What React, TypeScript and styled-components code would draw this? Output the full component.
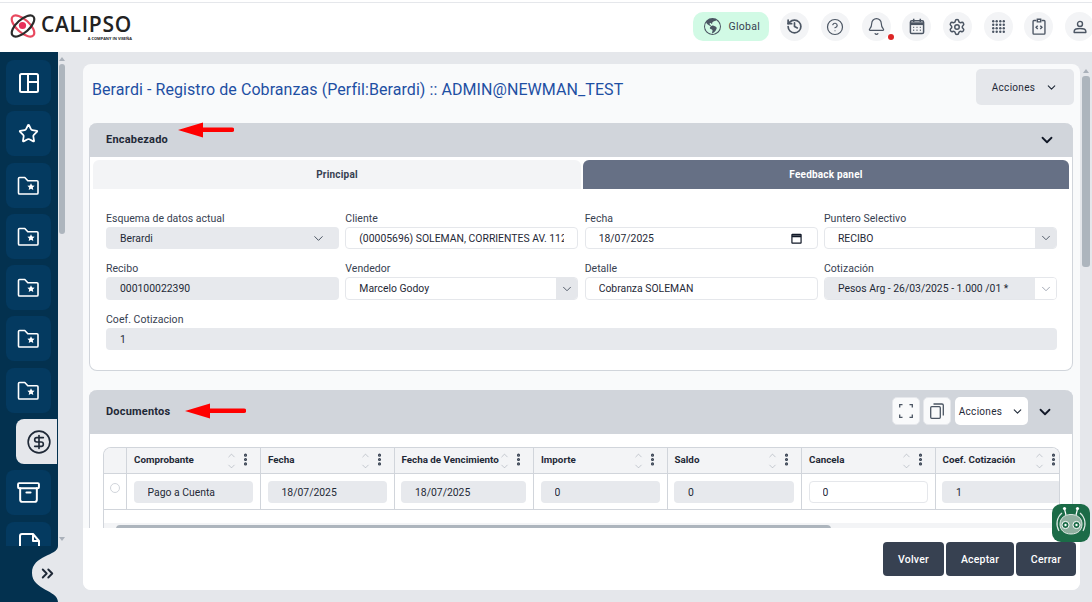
import { FC, ReactNode } from 'react';
import styled, { createGlobalStyle } from 'styled-components';
import { Archive, Bell, ChevronDown, ChevronUp, ChevronsRight, CircleDollarSign, CircleHelp, EllipsisVertical, History, Settings, Star } from 'lucide-react';
import { BsGlobeAmericas } from 'react-icons/bs';

const Global = createGlobalStyle`
  html, body { margin: 0; padding: 0; height: 602px; overflow: hidden; }
  body { font-family: Roboto, "Liberation Sans", sans-serif; background: #e5e7eb; color: #1f2937; }
  * { box-sizing: border-box; }
`;

const FolderStar: FC = () => (
  <svg width="23" height="19" viewBox="0 0 23 19" fill="none">
    <path d="M1.5 2.6c0-.6.5-1.1 1.1-1.1h5.2l3 3.2h9.1c.6 0 1.1.5 1.1 1.1v11.1c0 .6-.5 1.1-1.1 1.1H2.6c-.6 0-1.1-.5-1.1-1.1z" stroke="#fff" strokeWidth="1.6" strokeLinejoin="round" />
    <path d="M14 7.2l1.1 2.3 2.5.3-1.8 1.7.5 2.5-2.3-1.2-2.3 1.2.5-2.5-1.8-1.7 2.5-.3z" fill="#fff" />
  </svg>
);

const PanelsIcon: FC = () => (
  <svg width="20" height="20" viewBox="0 0 20 20" fill="none" stroke="#fff" strokeWidth="2">
    <rect x="1" y="1" width="18" height="18" rx="1.5" />
    <path d="M9 1v18M9 9h10" />
  </svg>
);

const FileCut: FC = () => (
  <svg width="24" height="24" viewBox="0 0 24 24" fill="none" stroke="#fff" strokeWidth="2" strokeLinejoin="round">
    <path d="M3 24V4a2 2 0 0 1 2-2h11l6 7v15M16 2v7h6" />
  </svg>
);

const LogoMark: FC = () => (
  <svg width="26" height="26" viewBox="0 0 26 26" fill="none">
    <ellipse cx="13" cy="13" rx="14" ry="6.4" transform="rotate(42 13 13)" stroke="#e8495f" strokeWidth="2.2" />
    <ellipse cx="13" cy="13" rx="14" ry="6.4" transform="rotate(-42 13 13)" stroke="#2b2b2b" strokeWidth="2.2" />
    <circle cx="12.5" cy="12.5" r="3.6" fill="#e8305a" />
  </svg>
);

const CalendarIcon: FC = () => (
  <svg width="16" height="17" viewBox="0 0 17 18" fill="none" stroke="#4b5563" strokeWidth="1.6">
    <rect x="1.5" y="3" width="14" height="13.5" rx="1.5" />
    <path d="M1.5 6h14" strokeWidth="3" />
    <path d="M5 .8v3.4M12 .8v3.4" />
    <path d="M4.5 10h1M8 10h1M11.5 10h1M4.5 13h1M8 13h1M11.5 13h1" strokeWidth="1.4" />
  </svg>
);

const GridDots: FC = () => (
  <svg width="13" height="13" viewBox="0 0 13 13" fill="#4b5563">
    {[1.2, 4.7, 8.3, 11.8].flatMap((y) => [1.2, 4.7, 8.3, 11.8].map((x) => <circle key={`${x}-${y}`} cx={x} cy={y} r="1.2" />))}
  </svg>
);

const ClipCode: FC = () => (
  <svg width="14" height="17" viewBox="0 0 16 20" fill="none" stroke="#4b5563" strokeWidth="1.6">
    <path d="M5 3H2a1 1 0 0 0-1 1v14a1 1 0 0 0 1 1h12a1 1 0 0 0 1-1V4a1 1 0 0 0-1-1h-3" />
    <path d="M6 1.500h4v3H6zM6.500 9l-2 2 2 2M9.500 9l2 2-2 2" />
  </svg>
);

const UserIcon: FC = () => (
  <svg width="14" height="14" viewBox="0 0 18 18" fill="none" stroke="#4b5563" strokeWidth="1.8">
    <circle cx="9" cy="5" r="3.2" />
    <path d="M1.500 14.500c0-2 2-3.500 7.500-3.500s7.500 1.500 7.500 3.500v1.500h-15z" strokeLinejoin="round" />
  </svg>
);

const FullscreenIcon: FC = () => (
  <svg width="14" height="14" viewBox="0 0 14 14" fill="none" stroke="#4b5563" strokeWidth="1.3">
    <path d="M.7 3.500V.7h2.800M10.500.7h2.800v2.800M13.300 10.500v2.800h-2.800M3.500 13.300H.7v-2.800" />
  </svg>
);

const CopyIcon: FC = () => (
  <svg width="14" height="16" viewBox="0 0 14 16" fill="none" stroke="#4b5563" strokeWidth="1.3">
    <rect x=".7" y="3.700" width="9.600" height="11.600" rx="1" />
    <path d="M3.500 1h8.500a1.300 1.300 0 0 1 1.300 1.300V12.500" />
  </svg>
);

const BotIcon: FC = () => (
  <svg width="38" height="38" viewBox="0 0 38 38" fill="none" stroke="#fff">
    <path d="M7 27a14 14 0 0 1 3-18M31 27a14 14 0 0 0-3-18" strokeWidth="1.2" opacity=".85" />
    <path d="M14 11l-1.500-6M24 11l1.500-6" strokeWidth="1.2" />
    <circle cx="12.500" cy="4.500" r="1.600" fill="#fff" stroke="none" />
    <circle cx="25.500" cy="4.500" r="1.600" fill="#fff" stroke="none" />
    <path d="M8 20c0-6 5-9.500 11-9.500S30 14 30 20s-4 10-11 10S8 26 8 20z" fill="#8fb0a0" stroke="#dfe8e3" strokeWidth="1" />
    <circle cx="13.500" cy="21" r="3.600" fill="#1b6b47" stroke="#fff" strokeWidth="1" />
    <circle cx="24.500" cy="21" r="3.600" fill="#1b6b47" stroke="#fff" strokeWidth="1" />
    <circle cx="13.500" cy="21" r="1.200" fill="#fff" stroke="none" />
    <circle cx="24.500" cy="21" r="1.200" fill="#fff" stroke="none" />
  </svg>
);

const CalendarGlyph: FC = () => (
  <svg width="11" height="11" viewBox="0 0 12 12" fill="none" stroke="#111827" strokeWidth="1.3">
    <rect x="1" y="1.500" width="10" height="9.500" rx=".5" />
    <path d="M1 3.500h10" strokeWidth="2" />
  </svg>
);

const Page = styled.div`
  width: 1092px;
  height: 602px;
  display: flex;
  flex-direction: column;
  position: relative;
  overflow: hidden;
`;

const TopBar = styled.header`
  height: 52px;
  flex: none;
  background: #fff;
  display: flex;
  align-items: center;
  justify-content: space-between;
  padding: 1px 0 0 10px;
  position: relative;
  &::before {
    content: "";
    position: absolute;
    left: 0;
    right: 0;
    top: 2px;
    height: 1px;
    background: #e5e7eb;
  }
`;

const Logo = styled.div`
  display: flex;
  align-items: flex-start;
  gap: 5px;
  margin-top: 1px;
`;

const LogoWords = styled.div`
  display: flex;
  flex-direction: column;
  align-items: flex-end;
`;

const LogoName = styled.span`
  font-family: "Open Sans", sans-serif;
  font-weight: 600;
  font-size: 21px;
  line-height: 23px;
  letter-spacing: 0.7px;
  color: #222;
`;

const LogoTag = styled.span`
  font-family: "Open Sans", sans-serif;
  font-weight: 700;
  font-size: 3.9px;
  line-height: 6px;
  color: #222;
`;

const TopActions = styled.div`
  display: flex;
  align-items: center;
  gap: 11.7px;
  margin-right: -2px;
`;

const GlobalPill = styled.div`
  width: 76px;
  height: 29px;
  border-radius: 10px;
  background: #d1fae5;
  display: flex;
  align-items: center;
  gap: 8px;
  padding-left: 11px;
  font-size: 10.5px;
  letter-spacing: 0.3px;
  color: #374151;
  svg { color: #4b5563; }
`;

const RoundButton = styled.div`
  width: 29px;
  height: 29px;
  border-radius: 50%;
  background: #f3f4f6;
  display: flex;
  align-items: center;
  justify-content: center;
  color: #4b5563;
  position: relative;
`;

const RedDot = styled.span`
  position: absolute;
  right: -3px;
  bottom: 1px;
  width: 6px;
  height: 6px;
  border-radius: 50%;
  background: #dc2626;
`;

const Body = styled.div`
  flex: 1;
  min-height: 0;
  display: flex;
`;

const SideColumn = styled.aside`
  width: 65px;
  flex: none;
  display: flex;
  flex-direction: column;
`;

const SideTop = styled.div`
  flex: 1;
  min-height: 0;
  display: flex;
`;

const SideList = styled.nav`
  width: 58px;
  background: #03314f;
  padding: 8px 0 0 6px;
  display: flex;
  flex-direction: column;
  gap: 6.3px;
  overflow: hidden;
`;

const SideItem = styled.div<{ $active?: boolean }>`
  width: ${(p) => (p.$active ? '41px' : '45px')};
  height: 45px;
  flex: none;
  margin-left: ${(p) => (p.$active ? '10px' : '0')};
  padding-left: ${(p) => (p.$active ? '5px' : '0')};
  border-radius: ${(p) => (p.$active ? '8px 0 0 8px' : '8px')};
  background: ${(p) => (p.$active ? '#e5e7eb' : '#043a60')};
  display: flex;
  align-items: center;
  justify-content: center;
  color: ${(p) => (p.$active ? '#1f2937' : '#fff')};
`;

const SideTuck = styled.div`
  height: 56px;
  width: 58px;
  background: #03314f;
  position: relative;
`;

const SideNotch = styled.svg`
  position: absolute;
  inset: 0;
`;

const SideExpand = styled.div`
  position: absolute;
  left: 38px;
  top: 18px;
  color: #1f2937;
  display: flex;
`;

const ScrollTrack = styled.div<{ $wide?: boolean }>`
  width: ${(p) => (p.$wide ? '12px' : '7px')};
  flex: none;
  display: flex;
  flex-direction: column;
  align-items: ${(p) => (p.$wide ? 'flex-start' : 'center')};
  padding: 5px ${(p) => (p.$wide ? '0 0 1px' : '0')};
`;

const ScrollArrow = styled.span<{ $down?: boolean; $inset?: number }>`
  width: 0;
  height: 0;
  margin-left: ${(p) => p.$inset ?? 0}px;
  border-left: 3.5px solid transparent;
  border-right: 3.5px solid transparent;
  ${(p) => (p.$down ? 'border-top: 4px solid #aab1ba;' : 'border-bottom: 4px solid #aab1ba;')}
  flex: none;
`;

const ScrollThumb = styled.div<{ $height: number; $wide?: boolean }>`
  width: ${(p) => (p.$wide ? '8px' : '6px')};
  height: ${(p) => p.$height}px;
  margin: 3px 0 0 ${(p) => (p.$wide ? '1px' : '0')};
  background: #adb5bd;
  border-radius: 3px;
  flex: none;
`;

const Spacer = styled.div`
  flex: 1;
`;

const Main = styled.main`
  flex: 1;
  min-width: 0;
  padding: 12px 0 12px 18px;
  display: flex;
`;

const Card = styled.section`
  width: 997px;
  flex: none;
  border-radius: 8px;
  overflow: hidden;
  display: flex;
  flex-direction: column;
  background: #f9fafb;
`;

const Scroller = styled.div`
  flex: 1;
  min-height: 0;
  overflow: hidden;
  padding: 0 7px 0 6px;
`;

const TitleRow = styled.div`
  height: 59px;
  display: flex;
  justify-content: space-between;
  align-items: flex-start;
  margin-left: -6px;
  padding: 5px 0 0 9px;
`;

const PageTitle = styled.h1`
  margin: 11px 0 0;
  font-size: 16px;
  line-height: 20px;
  font-weight: 400;
  color: #1e4fa3;
  letter-spacing: 0.07px;
`;

const ActionsButton = styled.div<{ $small?: boolean }>`
  display: flex;
  align-items: center;
  justify-content: center;
  gap: ${(p) => (p.$small ? '9px' : '10px')};
  width: ${(p) => (p.$small ? '73px' : '98px')};
  height: ${(p) => (p.$small ? '28px' : '36px')};
  border-radius: 5px;
  background: ${(p) => (p.$small ? '#fff' : '#e5e7eb')};
  margin-right: ${(p) => (p.$small ? '0' : '-1px')};
  margin-left: ${(p) => (p.$small ? '1px' : '0')};
  font-size: 10px;
  letter-spacing: 0.3px;
  color: #1f2937;
`;

const Panel = styled.div<{ $last?: boolean }>`
  background: #fff;
  border-radius: ${(p) => (p.$last ? '8px 8px 0 0' : '8px')};
  border: 1px solid #d1d5db;
  border-top: 0;
  margin-bottom: ${(p) => (p.$last ? '0' : '19px')};
  ${(p) => (p.$last ? 'min-height: 200px;' : '')}
`;

const PanelHeader = styled.div<{ $tall?: boolean }>`
  height: ${(p) => (p.$tall ? '44px' : '34px')};
  margin: 0 -1px;
  background: #d1d5db;
  border-radius: 8px 8px 0 0;
  display: flex;
  align-items: center;
  padding: 0 ${(p) => (p.$tall ? '19px' : '17px')} 0 17px;
  position: relative;
  color: #111827;
`;

const PanelName = styled.span`
  flex: 1;
  font-size: 11px;
  font-weight: 700;
  letter-spacing: 0.2px;
  color: #1f2937;
  position: relative;
  top: -1px;
`;

const HeaderTools = styled.div`
  display: flex;
  align-items: center;
  gap: 3px;
  margin: -2px 8px 0 0;
`;

const ToolButton = styled.div`
  width: 28px;
  height: 28px;
  border-radius: 5px;
  background: #f9fafb;
  border: 1px solid #e5e7eb;
  display: flex;
  align-items: center;
  justify-content: center;
`;

const RedArrow = styled.svg<{ $left: number; $top: number }>`
  position: absolute;
  left: ${(p) => p.$left}px;
  top: ${(p) => p.$top}px;
`;

const Tabs = styled.div`
  display: grid;
  grid-template-columns: 488px 486px;
  gap: 2px;
  padding: 3px 3px 0;
`;

const Tab = styled.div<{ $active?: boolean }>`
  height: 29px;
  display: flex;
  align-items: center;
  justify-content: center;
  font-size: 10px;
  font-weight: 700;
  letter-spacing: 0.2px;
  border-radius: 6px 6px 0 0;
  background: ${(p) => (p.$active ? '#667085' : '#f3f4f6')};
  color: ${(p) => (p.$active ? '#fff' : '#374151')};
`;

const Form = styled.div`
  display: grid;
  grid-template-columns: repeat(4, minmax(0, 1fr));
  column-gap: 6.3px;
  row-gap: 13px;
  padding: 23px 15px 20px 16px;
`;

const FormItem = styled.div<{ $full?: boolean }>`
  ${(p) => (p.$full ? 'grid-column: 1 / -1;' : '')}
`;

const Label = styled.div`
  height: 15px;
  font-size: 10.5px;
  line-height: 14px;
  letter-spacing: 0.03px;
  color: #374151;
`;

const FieldBox = styled.div<{ $muted?: boolean; $height?: number }>`
  height: ${(p) => p.$height ?? 22}px;
  border-radius: 4px;
  background: ${(p) => (p.$muted ? '#e7e9ed' : '#fff')};
  border: ${(p) => (p.$muted ? '0' : '1px solid #e5e7eb')};
  display: flex;
  align-items: center;
  overflow: hidden;
  font-size: 10.4px;
  color: #1f2937;
`;

const FieldText = styled.span<{ $muted?: boolean }>`
  flex: 1;
  min-width: 0;
  white-space: nowrap;
  overflow: hidden;
  margin: 0 13px 0 ${(p) => (p.$muted ? '14px' : '13px')};
`;

const FieldButton = styled.div<{ $plain?: boolean; $bare?: boolean }>`
  width: ${(p) => (p.$bare ? '42px' : '21px')};
  align-self: stretch;
  flex: none;
  display: flex;
  align-items: center;
  justify-content: center;
  background: ${(p) => (p.$bare ? 'transparent' : p.$plain ? '#fff' : '#e5e7eb')};
  color: ${(p) => (p.$plain ? '#9ca3af' : '#4b5563')};
`;

const FieldIcon = styled.div`
  width: 26px;
  flex: none;
  display: flex;
  align-items: center;
  color: #111827;
`;

const MutedPart = styled.div`
  flex: 1;
  align-self: stretch;
  background: #e7e9ed;
  display: flex;
  align-items: center;
  padding-left: 13px;
  white-space: nowrap;
`;

const TableWrap = styled.div`
  margin: 13px 13px 0 13px;
  width: 957px;
  height: 81px;
  border: 1px solid #d1d5db;
  border-bottom: 0;
  border-radius: 8px 8px 0 0;
  overflow: hidden;
  position: relative;
`;

const TableGrid = styled.div`
  display: grid;
  grid-template-columns: 23px 134px 133.5px 139.5px 133.5px 134.5px 133.5px 133.5px;
  grid-template-rows: 26px 36px;
`;

const HeadCell = styled.div`
  background: #f3f4f6;
  border-right: 1px solid #d1d5db;
  border-bottom: 1px solid #d1d5db;
  display: flex;
  align-items: center;
  padding: 0 7px 2px 7px;
  font-size: 9.8px;
  font-weight: 700;
  color: #1f2937;
  white-space: nowrap;
`;

const HeadLabel = styled.span`
  flex: 1;
  min-width: 0;
`;

const SortStack = styled.span`
  display: flex;
  flex-direction: column;
  color: #9ca3af;
  margin: 2px 1px 0 0;
`;

const KebabWrap = styled.span`
  display: flex;
  color: #374151;
  width: 15px;
  justify-content: center;
`;

const BodyCell = styled.div`
  border-right: 1px solid #d1d5db;
  border-bottom: 1px solid #d1d5db;
  padding: 7px 7px 0 6.5px;
  background: #fff;
`;

const RadioCell = styled(BodyCell)`
  padding: 9px 0 0 6px;
`;

const Radio = styled.span`
  display: block;
  width: 10px;
  height: 10px;
  border-radius: 50%;
  border: 1px solid #d1d5db;
`;

const HScroll = styled.div`
  position: absolute;
  left: 0;
  right: 0;
  bottom: 0;
  height: 5px;
  background: #f3f4f6;
`;

const HThumb = styled.div`
  position: absolute;
  left: 12px;
  top: 2px;
  width: 715px;
  height: 8px;
  border-radius: 4px;
  background: #adb5bd;
`;

const Footer = styled.footer`
  height: 62px;
  flex: none;
  background: #fff;
  display: flex;
  justify-content: flex-end;
  gap: 2px;
  padding: 14px 4px 0 0;
`;

const FooterButton = styled.div<{ $width: number }>`
  width: ${(p) => p.$width}px;
  height: 34px;
  border-radius: 4px;
  background: #374151;
  color: #fff;
  font-size: 10.5px;
  font-weight: 500;
  letter-spacing: 0.2px;
  display: flex;
  align-items: center;
  justify-content: center;
`;

const BotBadge = styled.div`
  position: absolute;
  left: 1052px;
  top: 504px;
  width: 38px;
  height: 38px;
  border-radius: 9px;
  background: #1b6b47;
`;

const Arrow: FC<{ left: number; top: number; length: number }> = ({ left, top, length }) => (
  <RedArrow $left={left} $top={top} width={length} height="16" viewBox={`0 0 ${length} 16`}>
    <path d={`M0 8L25 .5V5.5H${length - 2}a2.2 2.2 0 0 1 0 4.5H25v5.5z`} fill="#f00" />
  </RedArrow>
);

const Chevron: FC<{ size?: number; width?: number }> = ({ size = 14, width = 1.6 }) => <ChevronDown size={size} strokeWidth={width} />;

const Field: FC<{ text: string; muted?: boolean; height?: number; children?: ReactNode }> = ({ text, muted, height, children }) => (
  <FieldBox $muted={muted} $height={height}>
    <FieldText $muted={muted}>{text}</FieldText>
    {children}
  </FieldBox>
);

const columns = [
  { name: 'Comprobante', value: 'Pago a Cuenta', muted: true },
  { name: 'Fecha', value: '18/07/2025', muted: true },
  { name: 'Fecha de Vencimiento', value: '18/07/2025', muted: true },
  { name: 'Importe', value: '0', muted: true },
  { name: 'Saldo', value: '0', muted: true },
  { name: 'Cancela', value: '0', muted: false },
  { name: 'Coef. Cotización', value: '1', muted: true },
];

const App: FC = () => {
  return (
    <Page>
      <Global />
      <TopBar>
        <Logo>
          <LogoMark />
          <LogoWords>
            <LogoName>CALIPSO</LogoName>
            <LogoTag>A COMPANY IN VISEÑA</LogoTag>
          </LogoWords>
        </Logo>
        <TopActions>
          <GlobalPill>
            <BsGlobeAmericas size={17} />
            Global
          </GlobalPill>
          <RoundButton><History size={17} strokeWidth={2.4} /></RoundButton>
          <RoundButton><CircleHelp size={18} strokeWidth={1.6} /></RoundButton>
          <RoundButton>
            <Bell size={19} strokeWidth={1.5} />
            <RedDot />
          </RoundButton>
          <RoundButton><CalendarIcon /></RoundButton>
          <RoundButton><Settings size={18} strokeWidth={2} /></RoundButton>
          <RoundButton><GridDots /></RoundButton>
          <RoundButton><ClipCode /></RoundButton>
          <RoundButton><UserIcon /></RoundButton>
        </TopActions>
      </TopBar>
      <Body>
        <SideColumn>
          <SideTop>
            <SideList>
              <SideItem><PanelsIcon /></SideItem>
              <SideItem><Star size={21} strokeWidth={2} /></SideItem>
              <SideItem><FolderStar /></SideItem>
              <SideItem><FolderStar /></SideItem>
              <SideItem><FolderStar /></SideItem>
              <SideItem><FolderStar /></SideItem>
              <SideItem><FolderStar /></SideItem>
              <SideItem $active><CircleDollarSign size={26} strokeWidth={1.5} /></SideItem>
              <SideItem><Archive size={25} strokeWidth={1.9} /></SideItem>
              <SideItem><FileCut /></SideItem>
            </SideList>
            <ScrollTrack>
              <ScrollArrow />
              <ScrollThumb $height={170} />
              <Spacer />
              <ScrollArrow $down />
            </ScrollTrack>
          </SideTop>
          <SideTuck>
            <SideNotch width="58" height="56" viewBox="0 0 58 56">
              <path d="M58 0C58 10 32 9 32 27C32 44 58 44 58 56Z" fill="#e5e7eb" />
            </SideNotch>
            <SideExpand><ChevronsRight size={19} strokeWidth={2.4} /></SideExpand>
          </SideTuck>
        </SideColumn>
        <Main>
          <Card>
            <Scroller>
              <TitleRow>
                <PageTitle>Berardi - Registro de Cobranzas (Perfil:Berardi) :: ADMIN@NEWMAN_TEST</PageTitle>
                <ActionsButton>Acciones <Chevron size={13} width={2} /></ActionsButton>
              </TitleRow>
              <Panel>
                <PanelHeader>
                  <PanelName>Encabezado</PanelName>
                  <Chevron size={18} width={2.4} />
                  <Arrow left={89} top={-1} length={56} />
                </PanelHeader>
                <Tabs>
                  <Tab>Principal</Tab>
                  <Tab $active>Feedback panel</Tab>
                </Tabs>
                <Form>
                  <FormItem>
                    <Label>Esquema de datos actual</Label>
                    <Field text="Berardi" muted><FieldButton $bare><Chevron size={15} /></FieldButton></Field>
                  </FormItem>
                  <FormItem>
                    <Label>Cliente</Label>
                    <Field text="(00005696) SOLEMAN, CORRIENTES AV. 1123" />
                  </FormItem>
                  <FormItem>
                    <Label>Fecha</Label>
                    <Field text="18/07/2025"><FieldIcon><CalendarGlyph /></FieldIcon></Field>
                  </FormItem>
                  <FormItem>
                    <Label>Puntero Selectivo</Label>
                    <Field text="RECIBO"><FieldButton><Chevron /></FieldButton></Field>
                  </FormItem>
                  <FormItem>
                    <Label>Recibo</Label>
                    <Field text="000100022390" muted height={23} />
                  </FormItem>
                  <FormItem>
                    <Label>Vendedor</Label>
                    <Field text="Marcelo Godoy" height={23}><FieldButton><Chevron /></FieldButton></Field>
                  </FormItem>
                  <FormItem>
                    <Label>Detalle</Label>
                    <Field text="Cobranza SOLEMAN" height={23} />
                  </FormItem>
                  <FormItem>
                    <Label>Cotización</Label>
                    <FieldBox $height={23}>
                      <MutedPart>Pesos Arg - 26/03/2025 - 1.000 /01 *</MutedPart>
                      <FieldButton $plain><Chevron /></FieldButton>
                    </FieldBox>
                  </FormItem>
                  <FormItem $full>
                    <Label>Coef. Cotizacion</Label>
                    <Field text="1" muted />
                  </FormItem>
                </Form>
              </Panel>
              <Panel $last>
                <PanelHeader $tall>
                  <PanelName>Documentos</PanelName>
                  <Arrow left={96} top={13} length={61} />
                  <HeaderTools>
                    <ToolButton><FullscreenIcon /></ToolButton>
                    <ToolButton><CopyIcon /></ToolButton>
                    <ActionsButton $small>Acciones <Chevron size={13} width={2} /></ActionsButton>
                  </HeaderTools>
                  <Chevron size={18} width={2.4} />
                </PanelHeader>
                <TableWrap>
                  <TableGrid>
                    <HeadCell />
                    {columns.map((c) => (
                      <HeadCell key={c.name}>
                        <HeadLabel>{c.name}</HeadLabel>
                        <SortStack>
                          <ChevronUp size={11} strokeWidth={1.2} />
                          <ChevronDown size={11} strokeWidth={1.2} />
                        </SortStack>
                        <KebabWrap><EllipsisVertical size={15} strokeWidth={3} /></KebabWrap>
                      </HeadCell>
                    ))}
                    <RadioCell><Radio /></RadioCell>
                    {columns.map((c) => (
                      <BodyCell key={c.name}>
                        <Field text={c.value} muted={c.muted} />
                      </BodyCell>
                    ))}
                  </TableGrid>
                  <HScroll><HThumb /></HScroll>
                </TableWrap>
              </Panel>
            </Scroller>
            <Footer>
              <FooterButton $width={61}>Volver</FooterButton>
              <FooterButton $width={68}>Aceptar</FooterButton>
              <FooterButton $width={60}>Cerrar</FooterButton>
            </Footer>
          </Card>
          <ScrollTrack $wide>
            <ScrollArrow $inset={2} />
            <ScrollThumb $wide $height={191} />
          </ScrollTrack>
        </Main>
      </Body>
      <BotBadge><BotIcon /></BotBadge>
    </Page>
  );
};

export default App;
